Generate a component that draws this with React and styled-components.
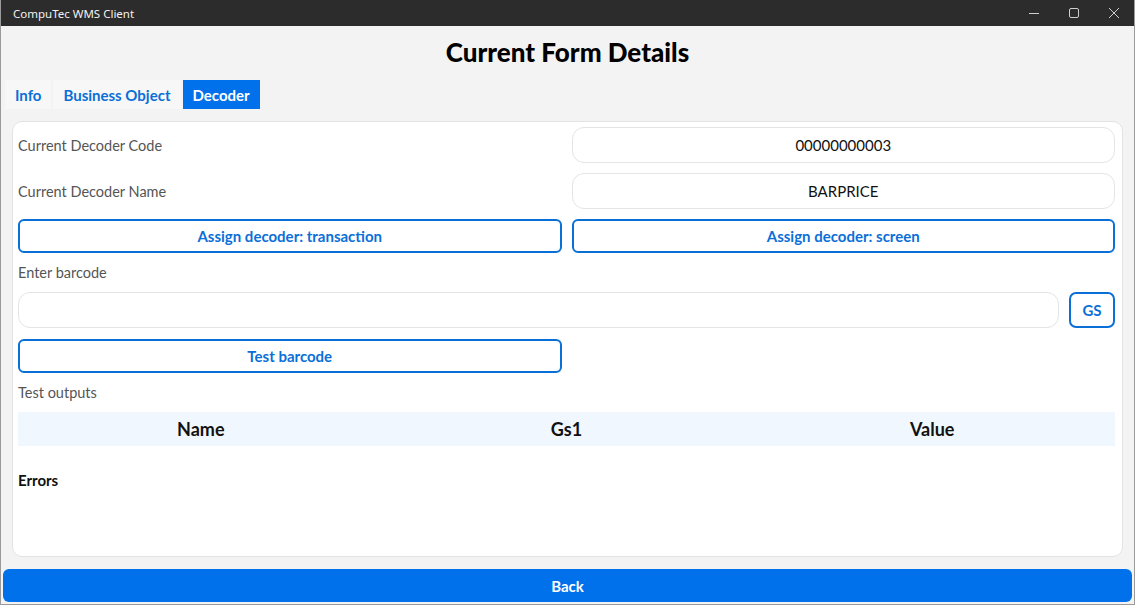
import React from 'react';
import styled, { createGlobalStyle } from 'styled-components';

const GlobalStyle = createGlobalStyle`
  html, body {
    margin: 0;
    padding: 0;
    height: 100%;
  }
  body {
    font-family: 'Lato', 'Noto Sans', sans-serif;
    background: #f3f3f3;
  }
  #root {
    height: 100%;
  }
`;

const Window = styled.div`
  display: flex;
  flex-direction: column;
  height: 605px;
  box-sizing: border-box;
  border: 1px solid #9a9a9a;
  border-top: none;
  background: #f3f3f3;
  overflow: hidden;
`;

const TitleBar = styled.div`
  display: flex;
  align-items: center;
  justify-content: space-between;
  height: 26px;
  flex: 0 0 26px;
  background: #2c2c2c;
  color: #f2f2f2;
  font-family: 'Noto Sans', sans-serif;
  font-size: 11.5px;
  padding-left: 12px;
`;

const WinControls = styled.div`
  display: flex;
  height: 100%;
`;

const WinButton = styled.div`
  width: 40px;
  height: 100%;
  display: flex;
  align-items: center;
  justify-content: center;
`;

const Body = styled.div`
  flex: 1;
  display: flex;
  flex-direction: column;
  padding: 0 2px 2px 2px;
  min-height: 0;
`;

const Heading = styled.h1`
  margin: 0;
  height: 54px;
  display: flex;
  align-items: center;
  justify-content: center;
  font-size: 26px;
  font-weight: 900;
  color: #000;
  padding-bottom: 2px;
  box-sizing: border-box;
`;

const Tabs = styled.div`
  display: flex;
  gap: 2px;
  padding-left: 2px;
  margin-bottom: 12px;
`;

const Tab = styled.div`
  height: 29px;
  display: flex;
  align-items: center;
  padding: 0 10px;
  font-size: 15px;
  font-weight: 700;
  color: ${(p) => (p.$active ? '#ffffff' : '#0b6fd8')};
  background: ${(p) => (p.$active ? '#0071eb' : '#f7f7f7')};
`;

const Card = styled.div`
  flex: 1;
  margin: 0 9px 12px 9px;
  background: #fff;
  border: 1px solid #e3e3e3;
  border-radius: 10px;
  padding: 5px 7px 6px 5px;
  display: flex;
  flex-direction: column;
  min-height: 0;
`;

const Grid = styled.div`
  display: grid;
  grid-template-columns: 1fr 1fr;
  column-gap: 10px;
  row-gap: 10px;
`;

const Label = styled.div`
  display: flex;
  align-items: center;
  font-size: 14.5px;
  color: #555;
  height: ${(p) => p.$h || 36}px;
`;

const ValueBox = styled.div`
  height: 36px;
  box-sizing: border-box;
  border: 1px solid #e4e4e4;
  border-radius: 12px;
  display: flex;
  align-items: center;
  justify-content: center;
  font-size: 15px;
  color: #111;
`;

const OutlineButton = styled.button`
  height: 34px;
  box-sizing: border-box;
  border: 2px solid #0b6fd8;
  border-radius: 6px;
  background: #fff;
  color: #0b6fd8;
  font-family: inherit;
  font-size: 15px;
  font-weight: 700;
  cursor: pointer;
  padding: 0;
`;

const BarcodeRow = styled.div`
  display: flex;
  gap: 10px;
  margin-bottom: 11px;
`;

const Input = styled.input`
  flex: 1;
  height: 36px;
  box-sizing: border-box;
  border: 1px solid #e4e4e4;
  border-radius: 12px;
  outline: none;
  font-family: inherit;
  font-size: 15px;
`;

const GsButton = styled(OutlineButton)`
  width: 46px;
  height: 36px;
  border-radius: 7px;
`;

const TestRow = styled.div`
  display: grid;
  grid-template-columns: 1fr 1fr;
  column-gap: 10px;
`;

const TableHead = styled.div`
  display: grid;
  grid-template-columns: 1fr 1fr 1fr;
  height: 34px;
  background: #f1f7fe;
  align-items: center;
  font-size: 18px;
  font-weight: 700;
  color: #111;
  text-align: center;
`;

const ErrorsTitle = styled.div`
  font-size: 15px;
  font-weight: 700;
  color: #111;
  margin-top: 25px;
`;

const BackButton = styled.button`
  height: 33px;
  flex: 0 0 33px;
  border: none;
  border-radius: 6px;
  background: #0071eb;
  color: #fff;
  font-family: inherit;
  font-size: 15px;
  font-weight: 700;
  cursor: pointer;
`;

const MinIcon = () => (
  <svg width="10" height="10" viewBox="0 0 10 10">
    <path d="M0 5.5h10" stroke="#cfcfcf" strokeWidth="1" />
  </svg>
);

const MaxIcon = () => (
  <svg width="10" height="10" viewBox="0 0 10 10">
    <rect x="0.5" y="0.5" width="9" height="9" rx="1.5" fill="none" stroke="#cfcfcf" strokeWidth="1" />
  </svg>
);

const CloseIcon = () => (
  <svg width="10" height="10" viewBox="0 0 10 10">
    <path d="M0 0L10 10M10 0L0 10" stroke="#cfcfcf" strokeWidth="1" />
  </svg>
);

export default function App() {
  return (
    <>
      <GlobalStyle />
      <Window>
        <TitleBar>
          <span>CompuTec WMS Client</span>
          <WinControls>
            <WinButton><MinIcon /></WinButton>
            <WinButton><MaxIcon /></WinButton>
            <WinButton><CloseIcon /></WinButton>
          </WinControls>
        </TitleBar>
        <Body>
          <Heading>Current Form Details</Heading>
          <Tabs>
            <Tab>Info</Tab>
            <Tab>Business Object</Tab>
            <Tab $active>Decoder</Tab>
          </Tabs>
          <Card>
            <Grid>
              <Label>Current Decoder Code</Label>
              <ValueBox>00000000003</ValueBox>
              <Label>Current Decoder Name</Label>
              <ValueBox>BARPRICE</ValueBox>
              <OutlineButton>Assign decoder: transaction</OutlineButton>
              <OutlineButton>Assign decoder: screen</OutlineButton>
            </Grid>
            <Label $h={39}>Enter barcode</Label>
            <BarcodeRow>
              <Input />
              <GsButton>GS</GsButton>
            </BarcodeRow>
            <TestRow>
              <OutlineButton>Test barcode</OutlineButton>
            </TestRow>
            <Label $h={39}>Test outputs</Label>
            <TableHead>
              <div>Name</div>
              <div>Gs1</div>
              <div>Value</div>
            </TableHead>
            <ErrorsTitle>Errors</ErrorsTitle>
          </Card>
          <BackButton>Back</BackButton>
        </Body>
      </Window>
    </>
  );
}
